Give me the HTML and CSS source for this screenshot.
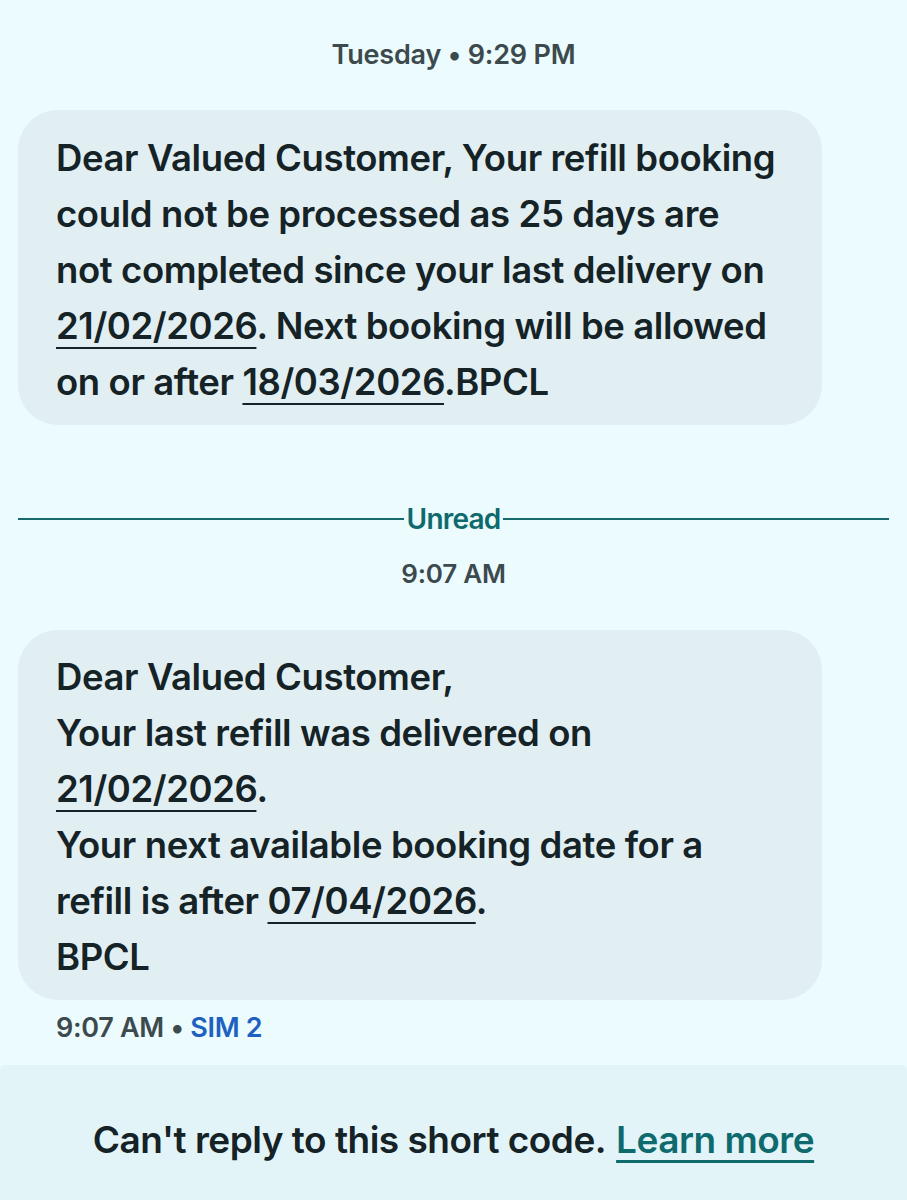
FILE: index.html
```html
<!DOCTYPE html>
<html lang="en">
<head>
    <meta charset="UTF-8">
    <meta name="viewport" content="width=device-width, initial-scale=1.0">
    <title>Messages</title>
    <link rel="stylesheet" href="styles.css">
</head>
<body>
    <!-- Conversation thread -->
    <div class="thread">
        <div class="stamp">Tuesday • 9:29 PM</div>

        <div class="bubble bubble-first">
            <p>Dear Valued Customer, Your refill booking<br>could not be processed as 25 days are<br>not completed since your last delivery on<br><span class="date">21/02/2026</span>. Next booking will be allowed<br>on or after <span class="date">18/03/2026</span>.BPCL</p>
        </div>

        <!-- Unread marker -->
        <div class="unread">
            <span class="unread-line"></span>
            <span class="unread-label">Unread</span>
            <span class="unread-line"></span>
        </div>

        <div class="stamp stamp-small">9:07 AM</div>

        <div class="bubble bubble-second">
            <p>Dear Valued Customer,<br>Your last refill was delivered on<br><span class="date">21/02/2026</span>.<br>Your next available booking date for a<br>refill is after <span class="date">07/04/2026</span>.<br>BPCL</p>
        </div>

        <div class="meta">9:07 AM • <span class="sim">SIM 2</span></div>
    </div>

    <!-- Footer notice instead of compose box -->
    <div class="notice">
        Can't reply to this short code. <a href="#" class="learn">Learn more</a>
    </div>
</body>
</html>
```

FILE: styles.css
```css
/* Page */
body {
    margin: 0;
    background-color: #ebfbfe;
    font-family: Inter, "Noto Sans", sans-serif;
    color: #152226;
    height: 1200px;
    display: flex;
    flex-direction: column;
    overflow: hidden;
}

.thread {
    flex: 1;
    padding: 0 18px;
}

/* Time stamps */
.stamp {
    text-align: center;
    font-size: 27px;
    font-weight: 600;
    color: #3d4a4d;
    line-height: 32px;
    padding-top: 39px;
    margin-bottom: 39px;
    letter-spacing: -0.2px;
}

.stamp-small {
    font-size: 26px;
    padding-top: 23px;
    margin-bottom: 40px;
}

/* Message bubbles */
.bubble {
    width: 804px;
    box-sizing: border-box;
    background-color: #e1eff3;
    border-radius: 40px;
    padding: 20px 38px 15px;
}

.bubble p {
    margin: 0;
    font-size: 36.5px;
    font-weight: 600;
    line-height: 56px;
    letter-spacing: -0.4px;
}

.bubble-second {
    padding: 19px 38px 15px;
}

.date {
    text-decoration: underline;
    text-decoration-thickness: 2px;
    text-underline-offset: 8px;
}

/* Unread divider */
.unread {
    display: flex;
    align-items: center;
    margin-top: 78px;
    height: 32px;
}

.unread-line {
    flex: 1;
    height: 2px;
    background-color: #176a6d;
}

.unread-label {
    font-size: 28px;
    font-weight: 600;
    color: #0e6a6d;
    padding: 0 3px;
    letter-spacing: -0.8px;
}

/* Delivery info under last bubble */
.meta {
    font-size: 27px;
    font-weight: 600;
    line-height: 32px;
    color: #3d4a4d;
    padding: 12px 38px 0;
    letter-spacing: -0.3px;
}

.sim {
    color: #2060c0;
}

/* Bottom notice */
.notice {
    height: 135px;
    background-color: #e3f4f9;
    border-radius: 5px 5px 0 0;
    display: flex;
    align-items: center;
    justify-content: center;
    font-size: 37px;
    font-weight: 600;
    color: #152226;
    padding-top: 14px;
    box-sizing: border-box;
    letter-spacing: -0.5px;
}

.learn {
    color: #0e6a6d;
    margin-left: 10px;
    text-decoration: underline;
    text-decoration-thickness: 3px;
    text-underline-offset: 7px;
}
```
